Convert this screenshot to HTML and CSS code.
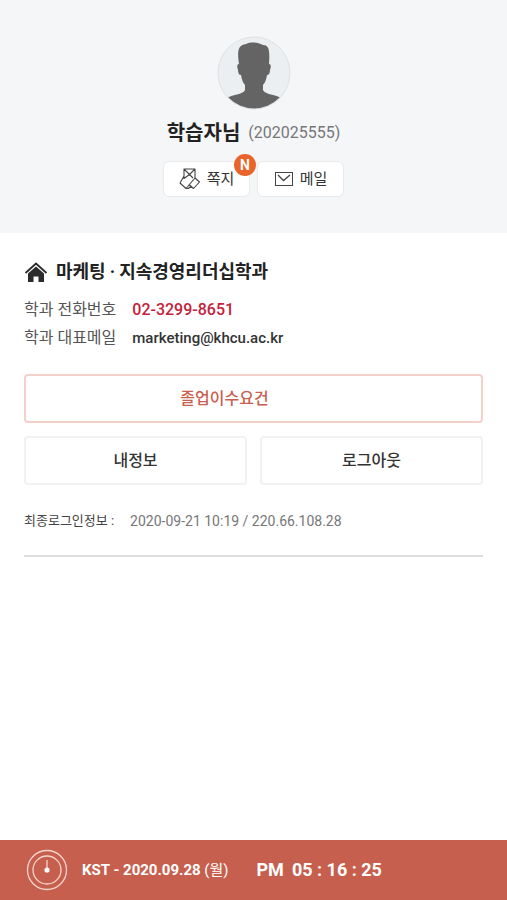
FILE: index.html
```html
<!DOCTYPE html>
<html lang="ko">
<head>
<meta charset="utf-8">
<meta name="viewport" content="width=device-width, initial-scale=1">
<title>내 정보</title>
<link rel="stylesheet" href="styles.css">
</head>
<body>
<header class="profile">
  <svg class="avatar" viewBox="0 0 74 74" aria-hidden="true">
    <defs><clipPath id="disc"><circle cx="37" cy="37" r="35.5"/></clipPath></defs>
    <circle cx="37" cy="37" r="36" fill="#eceff1" stroke="#dfe1e3"/>
    <path clip-path="url(#disc)" fill="#646464" d="M22 28C20 15 21 9 29 8C35 5 43 7 46 9C52 9 53 14 52 28Q55 28 53 34Q53 39 50 39Q49 46 46 49V54Q47 57 56 59Q62 60 66 64V74H8V64Q12 60 18 59Q27 57 28 54V49Q25 46 24 39Q21 39 21 34Q19 28 22 28Z"/>
  </svg>
  <h1 class="name">학습자님 <span class="student-id">(202025555)</span></h1>
  <div class="shortcuts">
    <button class="shortcut" type="button">
      <svg width="22" height="22" viewBox="0 0 22 22" fill="none" stroke="#444" stroke-width="1.1" stroke-linejoin="round" aria-hidden="true">
        <path d="M5 11V1H16V10M5 1L10.500 6.500L16 1M5 10.500L10.500 6.500L14 10M5 8L1 15L7 20.500L16 10L20.500 14L14.500 20.500L10.500 17M7 20.500H9.500L12 18"/>
      </svg>
      <span>쪽지</span><span class="badge">N</span>
    </button>
    <button class="shortcut" type="button">
      <svg width="20" height="16" viewBox="0 0 20 16" fill="none" stroke="#444" aria-hidden="true">
        <rect x="1.5" y="1.5" width="17" height="13"/><path d="M4 4L9.500 9.500L16 4" stroke-width="1.3"/>
      </svg>
      <span>메일</span>
    </button>
  </div>
</header>
<main class="content">
  <h2 class="department">
    <svg width="24" height="22" viewBox="0 0 24 22" aria-hidden="true">
      <path d="M1.500 12L12 2.500L22.500 12" fill="none" stroke="#2b2b2b" stroke-width="1.800"/>
      <path d="M4 12.500L12 5.500L20 12.500V21H14.500V15.500H9.500V21H4Z" fill="#2b2b2b"/>
    </svg>
    <span>마케팅<span class="dot">·</span>지속경영리더십학과</span>
  </h2>
  <dl class="contacts">
    <dt>학과 전화번호</dt><dd><a class="phone" href="tel:02-3299-8651">02-3299-8651</a></dd>
    <dt>학과 대표메일</dt><dd><a class="email" href="mailto:marketing@khcu.ac.kr">marketing@khcu.ac.kr</a></dd>
  </dl>
  <div class="actions">
    <button class="action graduation" type="button">졸업이수요건</button>
    <button class="action" type="button">내정보</button>
    <button class="action" type="button">로그아웃</button>
  </div>
  <p class="last-login"><span class="login-label">최종로그인정보 :</span><span>2020-09-21 10:19 / 220.66.108.28</span></p>
</main>
<footer class="clock-bar">
  <svg width="42" height="42" viewBox="0 0 42 42" fill="none" stroke="#f8d5cb" stroke-width="1.300" aria-hidden="true">
    <circle cx="21" cy="21" r="19.500"/><circle cx="21" cy="21" r="14"/>
    <path d="M21 11V20"/><circle cx="21" cy="21" r="2.600" fill="#fff" stroke="none"/>
  </svg>
  <span class="date">KST - 2020.09.28 <span class="weekday">(월)</span></span>
  <time class="time"><span>PM</span><span>05 : 16 : 25</span></time>
</footer>
</body>
</html>
```
FILE: styles.css
```css
* {
  box-sizing: border-box;
}

body {
  display: flex;
  flex-direction: column;
  min-height: 100vh;
  margin: 0;
  background: #fff;
  color: #333;
  font-family: Roboto, "Noto Sans CJK KR", sans-serif;
  font-size: 16px;
  line-height: 24px;
}

button {
  font: inherit;
  color: inherit;
}

a {
  color: inherit;
  text-decoration: none;
}

.profile {
  display: flex;
  flex-direction: column;
  align-items: center;
  padding: 36px 24px;
  background: #f5f6f8;
}

.avatar {
  width: 74px;
  height: 74px;
}

.name {
  display: flex;
  align-items: center;
  gap: 8px;
  margin: 9px 0 14px;
  color: #222;
  font-size: 20px;
  line-height: 28px;
  font-weight: 700;
}

.student-id {
  color: #777;
  font-size: 16px;
  font-weight: 400;
}

.shortcuts {
  display: flex;
  gap: 7px;
}

.shortcut {
  position: relative;
  display: flex;
  align-items: center;
  justify-content: center;
  gap: 6px;
  width: 87px;
  height: 36px;
  padding: 0;
  border: 1px solid #e9eaec;
  border-radius: 6px;
  background: #fff;
  font-size: 15px;
}

.badge {
  position: absolute;
  top: -8px;
  right: -7px;
  width: 22px;
  height: 22px;
  border-radius: 50%;
  background: #e8642a;
  color: #fff;
  font-size: 14px;
  line-height: 22px;
  font-weight: 700;
}

.content {
  flex: 1;
  padding: 25px 24px;
}

.department {
  display: flex;
  align-items: center;
  gap: 8px;
  margin: 0 0 12px;
  color: #222;
  font-size: 18px;
  line-height: 28px;
  font-weight: 700;
}

.dot {
  padding: 0 4px;
}

.contacts {
  display: grid;
  grid-template-columns: auto 1fr;
  gap: 4px 16px;
  margin: 0 0 24px;
}

.contacts dt {
  color: #555;
}

.contacts dd {
  margin: 0;
  font-weight: 500;
}

.phone {
  color: #c4223a;
}

.email {
  font-size: 15px;
}

.actions {
  display: grid;
  grid-template-columns: 1fr 1fr;
  gap: 13px;
}

.action {
  height: 49px;
  border: 2px solid #f1f1f1;
  border-radius: 4px;
  background: #fff;
  font-weight: 500;
}

.graduation {
  grid-column: 1 / -1;
  padding-right: 64px;
  border-color: #f4d0cb;
  color: #c95f50;
}

.last-login {
  display: flex;
  gap: 16px;
  margin: 24px 0 0;
  padding-bottom: 22px;
  border-bottom: 2px solid #dedede;
  color: #777;
  font-size: 14px;
}

.login-label {
  color: #444;
  font-size: 13px;
}

.clock-bar {
  display: flex;
  align-items: center;
  height: 60px;
  padding: 0 26px;
  background: #c65f4d;
  color: #fff;
}

.date {
  margin: 0 28px 0 14px;
  font-size: 15px;
  font-weight: 700;
}

.weekday {
  font-weight: 400;
}

.time {
  display: flex;
  gap: 8px;
  font-size: 18px;
  font-weight: 700;
}
```
